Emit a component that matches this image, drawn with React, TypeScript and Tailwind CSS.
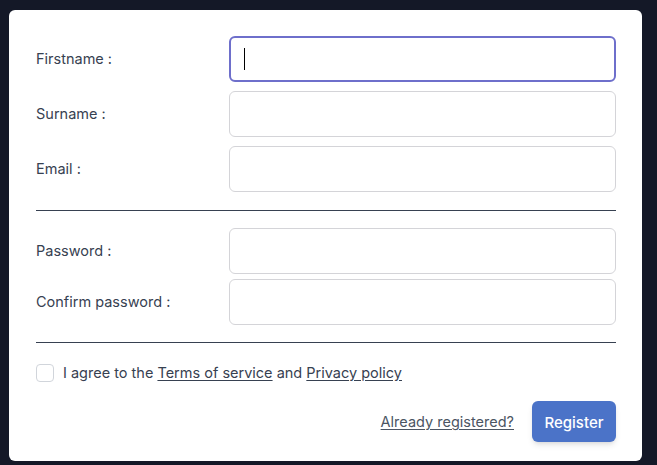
import React from 'react';

const Field: React.FC<{ label: string; focused?: boolean; type?: string }> = ({ label, focused, type = 'text' }) => (
  <div className="flex items-center">
    <label className="w-[193px] shrink-0 text-[14.5px] text-[#374151]">{label}</label>
    <div
      className={
        focused
          ? 'h-[46px] flex-1 rounded-md border-2 border-[#6e6fcb] bg-white flex items-center pl-[13px]'
          : 'h-[46px] flex-1 rounded-md border border-[#d4d4d8] bg-white'
      }
    >
      {focused && <span className="block w-px h-[22px] bg-black" />}
      <input type={type} className="hidden" />
    </div>
  </div>
);

const App: React.FC = () => {
  return (
    <div className="min-h-[465px] w-full bg-[#141827] pt-[10px] pl-[9px] pr-[15px] pb-[4px]" style={{ fontFamily: 'Inter, "Noto Sans", sans-serif' }}>
      <div className="w-[633px] rounded-md bg-white pl-[27px] pr-[26px] pt-[26px] pb-[19px]">
        <div className="flex flex-col gap-[9px]">
          <Field label="Firstname :" focused />
          <Field label="Surname :" />
          <Field label="Email :" />
        </div>
        <div className="mt-[18px] mb-[17px] h-px bg-[#374151]" />
        <div className="flex flex-col gap-[5px]">
          <Field label="Password :" type="password" />
          <Field label="Confirm password :" type="password" />
        </div>
        <div className="mt-[17px] h-px bg-[#374151]" />
        <div className="mt-[19px] flex items-center gap-[9px] text-[14.5px] text-[#374151]">
          <span className="block h-[18px] w-[18px] rounded-[4px] border border-[#d1d5db] bg-white" />
          <span>
            I agree to the <a className="underline underline-offset-2">Terms of service</a> and{' '}
            <a className="underline underline-offset-2">Privacy policy</a>
          </span>
        </div>
        <div className="mt-[17px] flex items-center justify-end gap-[18px]">
          <a className="text-[14.5px] text-[#4b5563] underline underline-offset-2 mt-[2px]">Already registered?</a>
          <button className="h-[41px] w-[84px] rounded-md bg-[#4b73c8] pt-[4px] text-[15px] font-medium text-white shadow-md">
            Register
          </button>
        </div>
      </div>
    </div>
  );
};

export default App;
